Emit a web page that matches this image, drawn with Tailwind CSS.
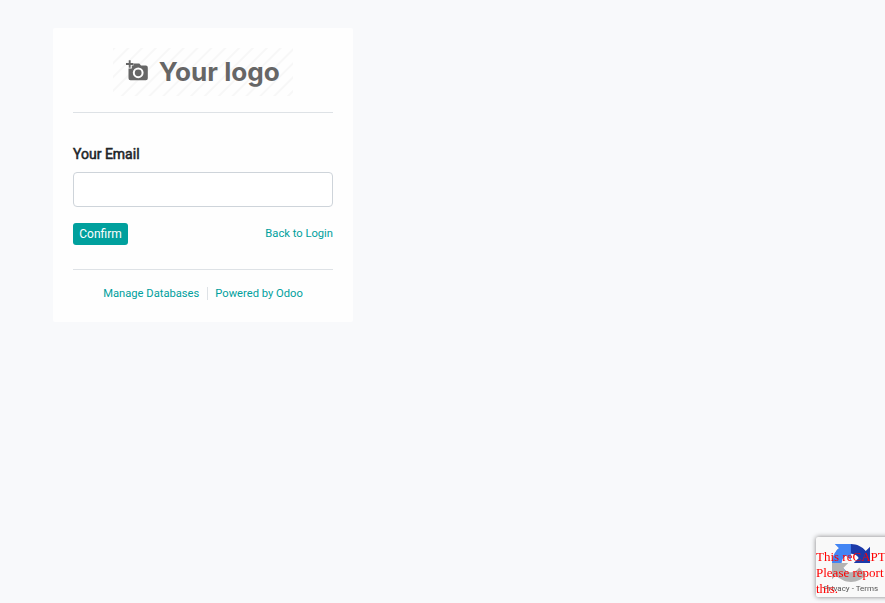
<!DOCTYPE html>
<html lang="en">
<head>
<meta charset="utf-8">
<title>Reset password</title>
<script src="https://cdn.jsdelivr.net/npm/@tailwindcss/browser@4"></script>
</head>
<body class="h-screen overflow-hidden bg-[#f8f9fb] font-[Roboto,sans-serif] text-[#212529]">
<main class="ml-[53px] pt-7">
  <div class="flex h-[294px] w-[300px] flex-col rounded-xs bg-[#fefefe] p-5">
    <div class="flex h-[65px] justify-center border-b border-[#dee2e6]">
      <svg class="h-12 w-[180px]" viewBox="0 0 180 48" role="img" aria-label="Your logo">
        <defs>
          <pattern id="stripes" width="9.8" height="9.8" patternUnits="userSpaceOnUse" patternTransform="rotate(45)">
            <rect width="2" height="9.8" fill="#f7f7f7"/>
          </pattern>
        </defs>
        <rect width="180" height="48" fill="url(#stripes)"/>
        <path fill="#666" fill-rule="evenodd" d="M20.5 15.5h5.8l1.7 2h4.8a2 2 0 0 1 2 2v10.700a2 2 0 0 1-2 2H17.500a2 2 0 0 1-2-2v-9.700h3.300v-3h1.700zM25.200 19.400a5.400 5.400 0 1 0 0 10.800a5.400 5.400 0 0 0 0-10.800z"/>
        <circle cx="25.200" cy="24.800" r="3.400" fill="#666"/>
        <path d="M16.700 12.300v7.400M13 16h7.400" stroke="#666" stroke-width="1.900"/>
        <text x="45.800" y="32.500" textLength="121" lengthAdjust="spacingAndGlyphs" style="font-family:Inter,sans-serif" class="fill-[#666] text-[25.5px] font-bold">Your logo</text>
      </svg>
    </div>
    <form class="mt-[31px]" onsubmit="return false">
      <label for="email" class="block h-[21px] text-sm leading-[21px] [-webkit-text-stroke:0.55px_#212529]">Your Email</label>
      <input id="email" type="text" class="mt-[7px] block h-[35px] w-full rounded border border-[#ced4da] bg-white px-3 outline-none">
      <div class="mt-4 flex h-[22px] items-center justify-between">
        <button class="h-[22px] w-[55px] rounded-[3px] bg-[#00a09d] text-xs text-white">Confirm</button>
        <a href="#" class="text-[11.2px] text-[#00a09d]">Back to Login</a>
      </div>
    </form>
    <div class="mt-6 flex items-start justify-center border-t border-[#dee2e6] pt-[17px] text-[11.2px] leading-[13px] text-[#00a09d]">
      <a href="#" class="pr-[7.500px]">Manage Databases</a>
      <a href="#" class="border-l border-[#dee2e6] pl-[7.500px]">Powered by Odoo</a>
    </div>
  </div>
</main>
<aside class="fixed top-[537px] left-[816px] h-[60px] w-64 overflow-visible rounded-[2px] bg-[#f9f9f9] shadow-[0_0_5px_gray]">
  <svg class="absolute top-[6.500px] left-4 size-[38px]" viewBox="0 0 64 64">
    <path fill="#1c3aa9" d="M64 31.955l-.033-1.370V4.687l-7.160 7.160C50.948 4.674 42.033.093 32.050.093c-10.400 0-19.622 4.960-25.458 12.640l11.736 11.860a15.550 15.550 0 0 1 4.754-5.334c2.050-1.600 4.952-2.906 8.968-2.906.485 0 .860.057 1.135.163 4.976.393 9.288 3.140 11.828 7.124l-8.307 8.307L64 31.953"/>
    <path fill="#4285f4" d="M31.862.094l-1.370.033H4.594l7.160 7.160C4.580 13.147 0 22.060 0 32.046c0 10.400 4.960 19.622 12.640 25.458L24.500 45.768a15.550 15.550 0 0 1-5.334-4.754c-1.600-2.050-2.906-4.952-2.906-8.968 0-.485.057-.860.163-1.135.393-4.976 3.140-9.288 7.124-11.828l8.307 8.307L31.860.095"/>
    <path fill="#b3b3b3" d="M.001 32.045l.033 1.370v25.898l7.160-7.160c5.860 7.173 14.774 11.754 24.760 11.754 10.400 0 19.622-4.960 25.458-12.640l-11.736-11.860a15.550 15.550 0 0 1-4.754 5.334c-2.050 1.600-4.952 2.906-8.968 2.906-.485 0-.860-.057-1.135-.163-4.976-.393-9.288-3.140-11.828-7.124l8.307-8.307c-10.522.040-22.400.066-27.295-.005"/>
  </svg>
  <p class="absolute top-[47px] left-0 w-[70px] text-center text-[8px] leading-[10px] whitespace-nowrap text-[#555]">Privacy - Terms</p>
  <p class="absolute top-3 left-0 font-['Liberation_Serif',serif] text-[13px] leading-4 whitespace-nowrap text-[red]">This reCAPT<br>Please report<br>this.</p>
</aside>
</body>
</html>
